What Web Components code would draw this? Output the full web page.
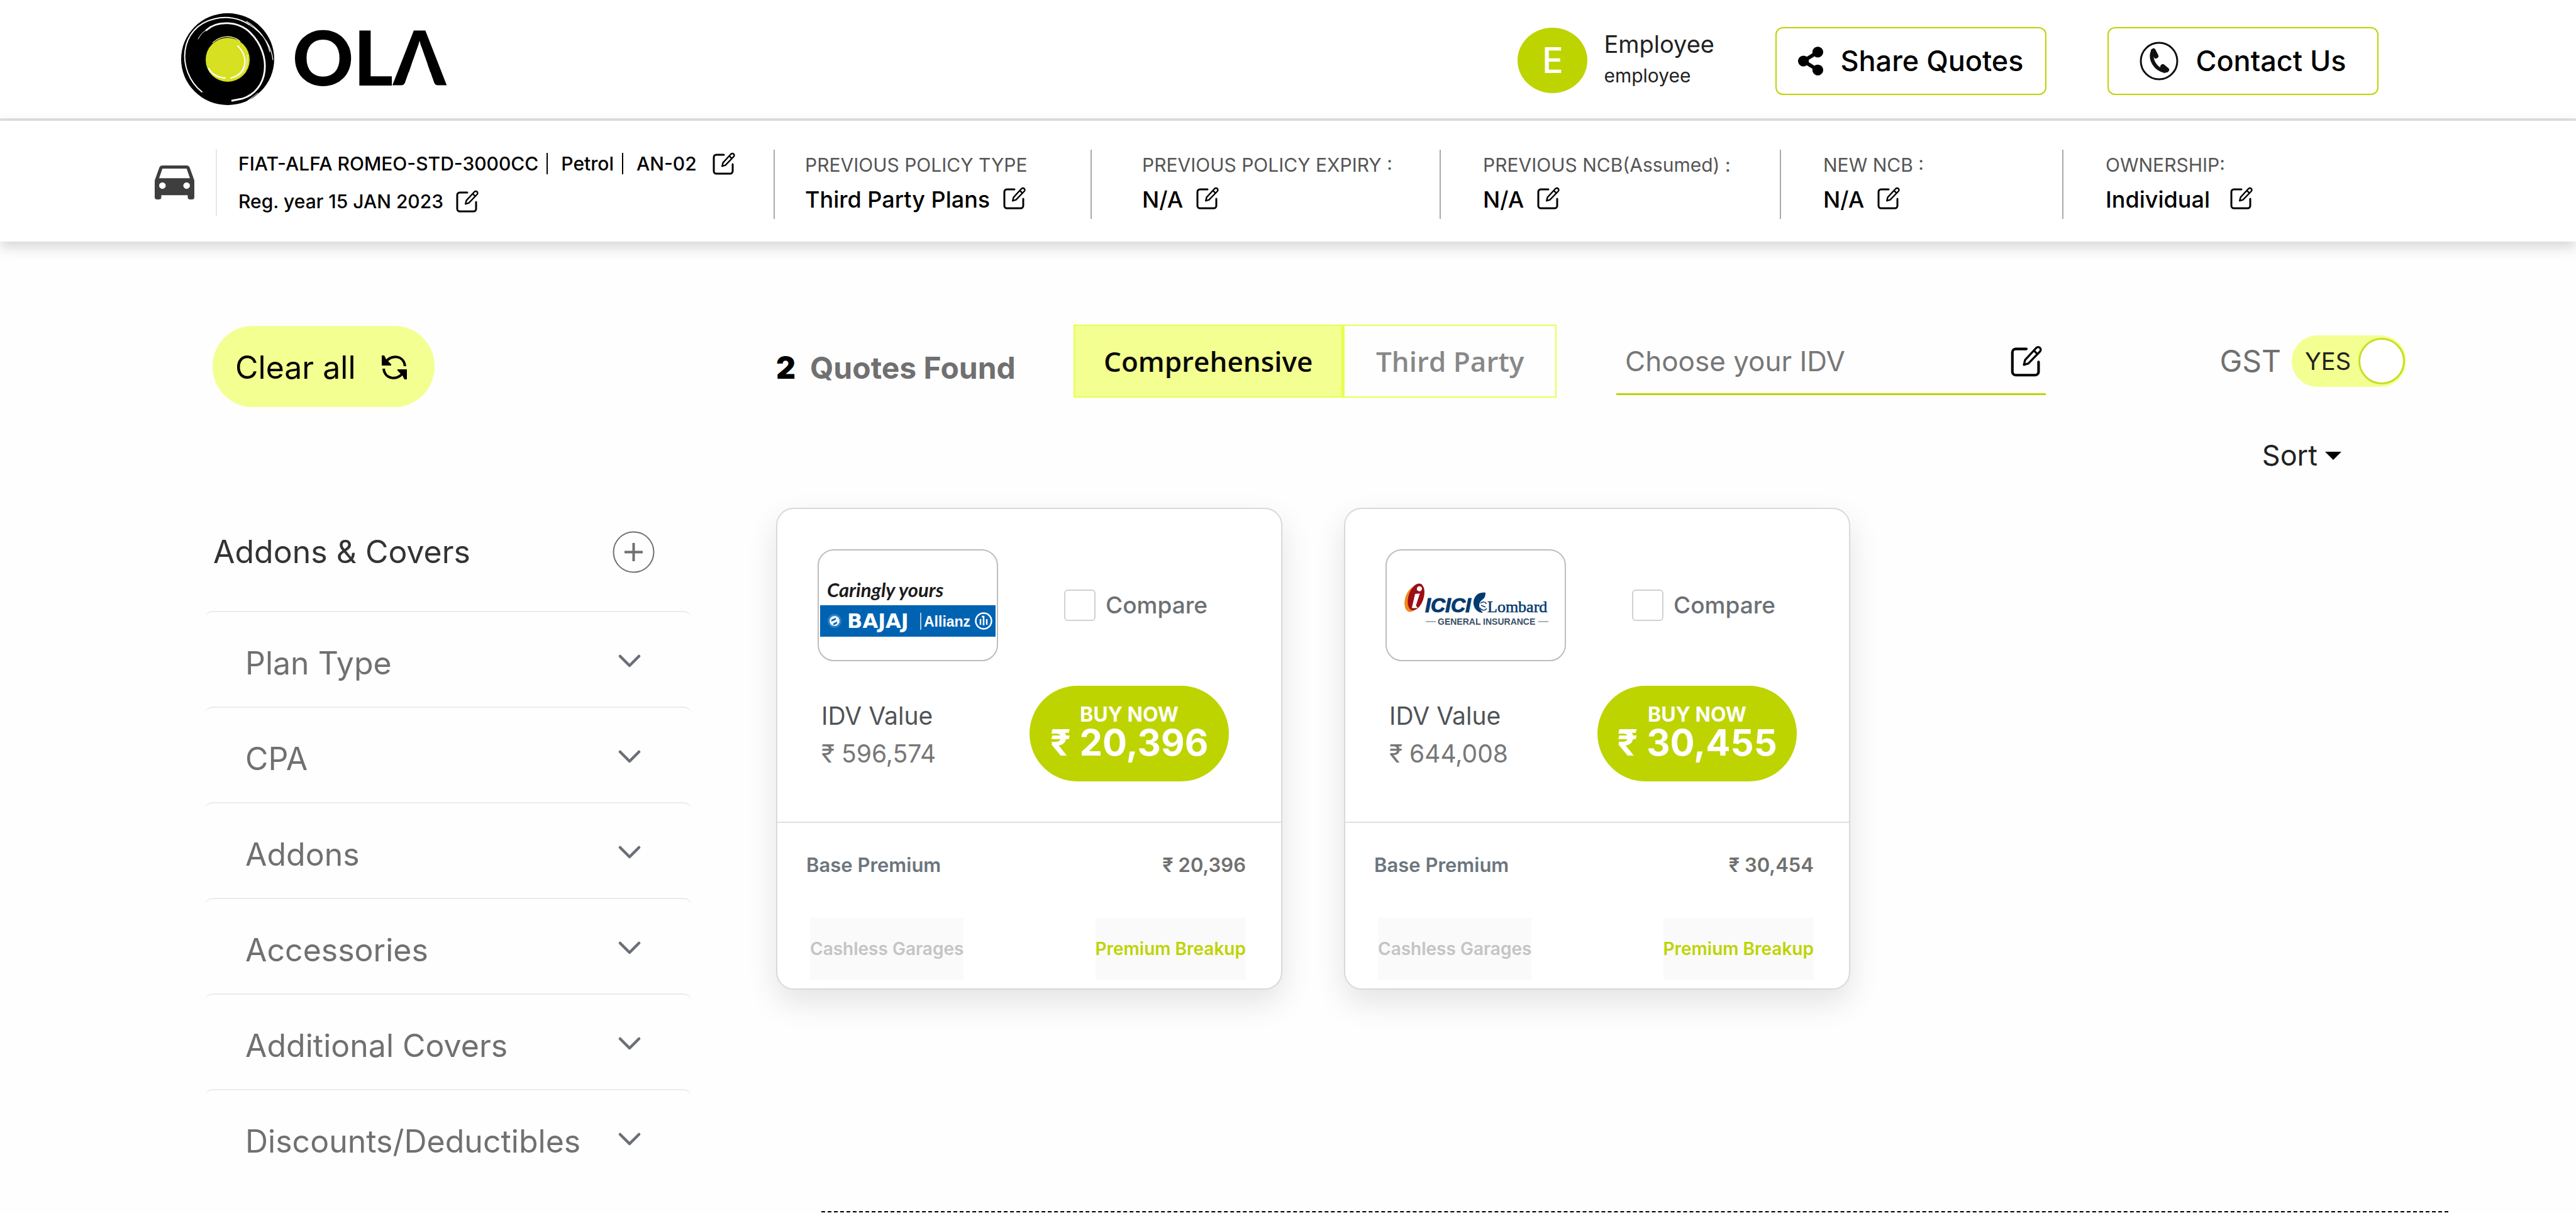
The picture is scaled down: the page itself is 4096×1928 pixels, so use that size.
<!DOCTYPE html>
<html lang="en">
<head>
<meta charset="utf-8">
<title>Ola Insurance Quotes</title>
<style>
  html, body { margin: 0; }
  body {
    font-family: Inter, "Noto Sans", sans-serif;
    color: #000;
    background: #fefefe;
    --lime: #bdd400;
    --lime-soft: #f3ff90;
    --lime-line: #e7ff4d;
    --grey: #707070;
  }
</style>
</head>
<body>
<quote-page></quote-page>
<script>
const BASE = `
  *, *::before, *::after { box-sizing: border-box; }
  button, input, select { font: inherit; color: inherit; background: none; border: 0; padding: 0; margin: 0; outline: 0; }
  button, a, label, select { cursor: pointer; }
  a { text-decoration: none; color: inherit; }
  svg { display: block; flex: none; }
  h2, h3, p { margin: 0; font: inherit; }
`;
function define(name, css, markup) {
  const template = document.createElement('template');
  customElements.define(name, class extends HTMLElement {
    constructor() {
      super();
      template.innerHTML = '<style>' + BASE + css + '</style>' + (typeof markup === 'function' ? markup(this) : markup);
      this.attachShadow({ mode: 'open' }).append(template.content.cloneNode(true));
    }
  });
}

/* Square with a pencil; --size sets its box */
define('edit-button', `
  :host { display: inline-flex; flex: none; }
  button { display: flex; }
  svg { width: var(--size, 36px); height: var(--size, 36px); }
`, `
  <button type="button" aria-label="Edit">
    <svg viewBox="0 0 36 36" fill="none" stroke="#000" stroke-width="3" stroke-linecap="round" stroke-linejoin="round">
      <path d="M18 4H6a4 4 0 0 0-4 4v22a4 4 0 0 0 4 4h22a4 4 0 0 0 4-4V19"/>
      <path stroke-width="2.4" d="M29.4 2.8a2.9 2.9 0 0 1 4.2 4.2L20.4 20.6l-5.2 1.6 1.4-5.6zM26.6 5.8l4 4"/>
    </svg>
  </button>
`);

define('brand-logo', `
  :host { display: flex; align-items: center; }
  .mark { width: 148px; height: 146px; }
  .word { width: 260px; height: 120px; margin-left: 32px; overflow: visible; }
`, `
  <svg class="mark" viewBox="0 0 148 146" fill="none">
    <ellipse cx="74" cy="73" rx="74" ry="73" fill="#000"/>
    <g stroke="#fff" stroke-linecap="round">
      <path stroke-width="2" d="M33 125C-8 92-4 22 53 9c20-5 40-1 55 9"/>
      <path stroke-width="2.8" d="M40 27C57 11 91 12 110 31c36 36 29 92-13 105l-16 3"/>
      <path stroke-width="1.3" d="M108 18c26 16 36 38 38 56M104 13c18 11 32 27 37 48"/>
      <path stroke-width="1" d="M27 41c3-6 7-11 13-14M106 139l16-12M114 137l11-11"/>
    </g>
    <ellipse cx="74" cy="74" rx="35" ry="35" fill="#d7e021"/>
    <path stroke="#fff" stroke-width="2.2" stroke-linecap="round" d="M90 52c18 17 15 44-11 51M44 88c5 9 14 14 26 15"/>
    <path stroke="#eef29a" stroke-width="1.5" d="M50 47c13-12 31-13 44-2M105 66c2 18-5 30-20 36"/>
  </svg>
  <svg class="word" viewBox="0 0 260 120">
    <text x="-3" y="102" font-family="Lato, sans-serif" font-weight="900" font-size="120" fill="#000">OLA</text>
    <path d="M186.500 68h25.300l12.200 35h-49.500z" fill="#fff"/>
  </svg>
`);

define('outline-button', `
  :host { display: block; }
  button {
    display: flex; align-items: center; justify-content: center;
    height: 108px; min-width: 431px; padding: 0 30px; gap: 27px;
    border: 2px solid var(--lime); border-radius: 12px; background: #fff;
    font-size: 45px; line-height: 60px; font-weight: 500; white-space: nowrap;
  }
`, `<button type="button"><slot name="icon"></slot><slot></slot></button>`);

define('site-header', `
  :host {
    display: flex; align-items: center; height: 192px;
    padding: 0 314px 0 288px; border-bottom: 4px solid #dfe1e5; background: #fff;
  }
  .right { display: flex; align-items: center; gap: 97px; margin-left: auto; padding-top: 6px; }
  .user { display: flex; align-items: center; gap: 26px; padding-bottom: 2px; }
  .avatar {
    display: flex; align-items: center; justify-content: center;
    width: 111px; height: 104px; border-radius: 50%;
    background: var(--lime); color: #fff; font-size: 56px; line-height: 64px; font-weight: 500;
  }
  .name { font-size: 38px; line-height: 48px; color: #222; }
  .role { font-size: 30px; line-height: 52px; color: #222; }
`, `
  <brand-logo role="img" aria-label="Ola"></brand-logo>
  <div class="right">
    <div class="user">
      <div class="avatar">E</div>
      <div><div class="name">Employee</div><div class="role">employee</div></div>
    </div>
    <outline-button>
      <svg slot="icon" width="40" height="46" viewBox="0 0 448 512"><path d="M352 320c-22.608 0-43.387 7.819-59.79 20.895l-102.486-64.054a96.551 96.551 0 0 0 0-41.683l102.486-64.054C308.613 184.181 329.392 192 352 192c53.019 0 96-42.981 96-96S405.019 0 352 0s-96 42.981-96 96c0 7.158.79 14.13 2.276 20.841L155.79 180.895C139.387 167.819 118.608 160 96 160c-53.019 0-96 42.981-96 96s42.981 96 96 96c22.608 0 43.387-7.819 59.79-20.895l102.486 64.054A96.301 96.301 0 0 0 256 416c0 53.019 42.981 96 96 96s96-42.981 96-96-42.981-96-96-96z"/></svg>
      Share Quotes
    </outline-button>
    <outline-button>
      <svg slot="icon" width="62" height="62" viewBox="0 0 62 62" fill="none" stroke="#111" stroke-linecap="round">
        <circle cx="31" cy="31" r="29" stroke-width="3"/>
        <path stroke-width="6" d="M20 18c-3 11 5 26 20 29"/>
        <path stroke-width="8" d="M22 15l4 8M37 40l6 5"/>
      </svg>
      Contact Us
    </outline-button>
  </div>
`);

define('policy-fact', `
  :host { display: block; height: 110px; padding-left: var(--inset, 67px); border-left: 2px solid #a9a9a9; white-space: nowrap; }
  .label { font-size: 30px; line-height: 48px; color: #555; }
  .value { display: flex; align-items: center; gap: var(--gap, 21px); font-size: 36px; line-height: 62px; font-weight: 500; }
  edit-button { padding-bottom: 4px; }
`, el => `
  <div class="label">${el.getAttribute('label')}</div>
  <div class="value"><slot></slot><edit-button></edit-button></div>
`);

define('policy-bar', `
  :host {
    display: grid; grid-template-columns: 984fr 504fr 555fr 541fr 449fr 817fr; align-items: center;
    height: 192px; padding: 10px 0 0 246px; background: #fff; position: relative;
    box-shadow: 0 8px 20px rgba(0, 0, 0, .17);
  }
  .vehicle { display: flex; align-items: center; padding-bottom: 6px; white-space: nowrap; }
  .lines { margin-left: 34px; padding-left: 34px; border-left: 2px solid #e6e6e6; font-size: 30px; line-height: 60px; font-weight: 500; height: 106px; display: flex; flex-direction: column; justify-content: center; }
  .line { display: flex; align-items: center; }
  .bar { width: 2px; height: 34px; margin: 0 21px 0 13px; background: #000; }
  .line edit-button { margin-left: 20px; }
  .line.model edit-button { margin-left: 25px; }
`, `
  <div class="vehicle">
    <svg width="63" height="54" viewBox="3 5 18 16" preserveAspectRatio="none" fill="#3e3e3e"><path d="M18.92 6.01C18.72 5.42 18.16 5 17.5 5h-11c-.66 0-1.21.42-1.42 1.01L3 12v8c0 .55.45 1 1 1h1c.55 0 1-.45 1-1v-1h12v1c0 .55.45 1 1 1h1c.55 0 1-.45 1-1v-8l-2.08-5.99zM6.5 16c-.83 0-1.5-.67-1.5-1.5S5.67 13 6.5 13s1.5.67 1.5 1.5S7.33 16 6.5 16zm11 0c-.83 0-1.5-.67-1.5-1.5s.67-1.5 1.5-1.5 1.5.67 1.5 1.5-.67 1.5-1.5 1.5zM5 11l1.5-4.5h11L19 11H5z"/></svg>
    <div class="lines">
      <div class="line model"><span>FIAT-ALFA ROMEO-STD-3000CC</span><i class="bar"></i><span>Petrol</span><i class="bar"></i><span>AN-02</span><edit-button></edit-button></div>
      <div class="line"><span>Reg. year 15 JAN 2023</span><edit-button></edit-button></div>
    </div>
  </div>
  <policy-fact label="PREVIOUS POLICY TYPE" style="--inset:48px">Third Party Plans</policy-fact>
  <policy-fact label="PREVIOUS POLICY EXPIRY :" style="--inset:80px">N/A</policy-fact>
  <policy-fact label="PREVIOUS NCB(Assumed) :">N/A</policy-fact>
  <policy-fact label="NEW NCB :">N/A</policy-fact>
  <policy-fact label="OWNERSHIP:" style="--gap:32px">Individual</policy-fact>
`);

define('filter-item', `
  :host { display: block; }
  button {
    display: flex; align-items: center; justify-content: space-between; width: 100%; height: 152px;
    padding: 12px 80px 0 64px; border-top: 2px solid #ebebeb; border-radius: 12px;
    font-size: 50px; line-height: 60px; color: var(--grey); text-align: left; white-space: nowrap;
  }
  svg { margin-bottom: 6px; }
`, `
  <button type="button" aria-expanded="false"><span><slot></slot></span>
    <svg width="36" height="22" viewBox="0 0 36 22" fill="none" stroke="#6b6e78" stroke-width="4.5" stroke-linecap="round" stroke-linejoin="round"><path d="M3 3l15 15L33 3"/></svg>
  </button>
`);

define('filter-panel', `
  :host { display: block; }
  .clear {
    display: flex; align-items: center; justify-content: space-between;
    width: 353px; height: 129px; margin: 2px 0 0 12px; padding: 2px 44px 0 36px;
    border-radius: 64px; background: var(--lime-soft); font-size: 50px; line-height: 60px;
  }
  .head { display: flex; align-items: center; justify-content: space-between; height: 188px; margin-top: 136px; padding: 0 58px 0 13px; }
  h2 { font-size: 50px; line-height: 60px; color: #333; }
`, `
  <button class="clear" type="button">Clear all
    <svg width="40" height="40" viewBox="0 0 40 40" fill="none" stroke="#000" stroke-width="4">
      <path d="M6 12C14-1 35 0 37 18M34 28C26 41 5 40 3 22"/>
      <path fill="#000" stroke="none" d="M0 1h4l3 6 8 8v2H0zM40 39h-4l-3-6-8-8v-2h15z"/>
    </svg>
  </button>
  <div class="head">
    <h2>Addons &amp; Covers</h2>
    <button type="button" aria-label="Expand all">
      <svg width="67" height="67" viewBox="0 0 67 67" fill="none" stroke="#707070"><circle cx="33.500" cy="33.500" r="32" stroke-width="2"/><path stroke-width="4" d="M19 33.500h29M33.500 19v29"/></svg>
    </button>
  </div>
  <filter-item>Plan Type</filter-item>
  <filter-item>CPA</filter-item>
  <filter-item>Addons</filter-item>
  <filter-item>Accessories</filter-item>
  <filter-item>Additional Covers</filter-item>
  <filter-item>Discounts/Deductibles</filter-item>
`);

define('quote-toolbar', `
  :host { display: block; padding-right: 67px; }
  .row { display: flex; align-items: center; height: 116px; gap: 95px; white-space: nowrap; }
  .count { flex: none; width: 378px; padding-top: 22px; display: flex; gap: 23px; font-size: 48px; line-height: 60px; font-weight: 700; color: var(--grey); }
  .count b { color: #000; }
  .tabs { flex: none; display: flex; width: 768px; border: 2px solid var(--lime-line); height: 116px; font: 600 44px/60px "Open Sans", sans-serif; }
  .tabs button { flex: 1; color: #888; }
  .tabs .on { flex: none; padding: 0 46px; background: var(--lime-soft); color: #0a0a0a; border-right: 5px solid var(--lime-line); }
  .idv { flex: 0 1 683px; min-width: 0; display: flex; align-items: center; align-self: flex-start; height: 112px; padding: 6px 6px 0 14px; border-bottom: 3px solid var(--lime); --size: 50px; }
  .idv input { flex: 1; min-width: 0; font-size: 44px; line-height: 60px; }
  .idv input::placeholder { color: #777; opacity: 1; }
  .gst { display: flex; align-items: center; gap: 17px; margin-left: auto; font-size: 48px; line-height: 60px; color: var(--grey); }
  .gst input { position: absolute; opacity: 0; width: 1px; height: 1px; }
  .track { display: flex; align-items: center; justify-content: space-between; width: 182px; height: 82px; padding: 0 2px 0 21px; border-radius: 41px; background: var(--lime-soft); color: #222; font-size: 38px; }
  .knob { width: 74px; height: 74px; border: 3px solid #c8de22; border-radius: 50%; background: #fff; }
  .sort { display: flex; align-items: center; justify-content: flex-end; gap: 12px; margin-top: 68px; padding-right: 103px; font-size: 45px; line-height: 48px; color: #222; }
  select { appearance: none; field-sizing: content; height: 48px; }
`, `
  <div class="row">
    <div class="count"><b>2</b><span>Quotes Found</span></div>
    <div class="tabs"><button type="button" class="on">Comprehensive</button><button type="button">Third Party</button></div>
    <div class="idv"><input type="text" placeholder="Choose your IDV" aria-label="Choose your IDV"><edit-button></edit-button></div>
    <label class="gst">GST<input type="checkbox" checked><span class="track">YES<i class="knob"></i></span></label>
  </div>
  <div class="sort">
    <select aria-label="Sort"><option>Sort</option></select>
    <svg width="26" height="13" viewBox="0 0 26 13"><path d="M0 0h26L13 13z"/></svg>
  </div>
`);

define('bajaj-logo', `:host { display: block; } svg { width: 283px; height: 174px; }`, `
  <svg viewBox="0 0 283 174">
    <text x="13" y="74" font-family="Lato, cursive" font-style="italic" font-weight="700" font-size="31" fill="#1b1b1b">Caringly yours</text>
    <rect x="2" y="87" width="279" height="50" fill="#0063b2"/>
    <circle cx="25" cy="112" r="11" fill="#2f7fc4"/><circle cx="25" cy="112" r="8" fill="#eef4fb"/>
    <path d="M20 110l7-3v3l-7 3zm3 6l6-3v3l-6 3z" fill="#0063b2"/>
    <g fill="#fff" font-weight="700">
      <text x="45" y="123" font-family="DejaVu Sans, sans-serif" font-size="32">BAJAJ</text>
      <text x="167" y="121" font-family="Liberation Sans, sans-serif" font-size="23">Allianz</text>
    </g>
    <path d="M162 99v27" stroke="#a9cbe8" stroke-width="2"/>
    <g fill="none" stroke="#fff" stroke-width="2.500"><circle cx="262" cy="112" r="12.500"/><path d="M257 118v-9M262 119v-14h-3M267 118v-9"/></g>
  </svg>
`);

define('icici-logo', `:host { display: block; } svg { width: 283px; height: 174px; }`, `
  <svg viewBox="0 0 283 174">
    <g transform="rotate(18 47 76)">
      <ellipse cx="42" cy="79" rx="12" ry="21" fill="#f08a1d"/>
      <ellipse cx="46" cy="74" rx="12" ry="22" fill="#9c0d16"/>
      <path d="M43 70l7-3v20l4 3-9 3z" fill="#fff"/><circle cx="47" cy="60" r="4" fill="#fff"/>
    </g>
    <text x="61" y="98" font-family="Liberation Sans, sans-serif" font-style="italic" font-weight="700" font-size="32" fill="#053a70" stroke="#053a70">ICICI</text>
    <path d="M157 67c-13-2-20 8-19 18 1 8 7 14 15 14-7-7-8-15-2-20 5-3 6-7 6-12z" fill="#053a70"/>
    <path d="M149 84c4-4 9-2 9 1M148 91c3 5 9 5 11 1M150 87l7 3" fill="none" stroke="#053a70" stroke-width="1.500"/>
    <text x="160" y="98" font-family="Liberation Serif, serif" font-size="26" fill="#053a70" stroke="#053a70" stroke-width=".6">Lombard</text>
    <text x="81" y="118" font-family="Liberation Sans, sans-serif" font-weight="700" font-size="14" fill="#3b4f68">GENERAL INSURANCE</text>
    <path d="M62 113h16M241 113h16" stroke="#8b98a8" stroke-width="1.500"/>
  </svg>
`);

define('quote-card', `
  :host {
    display: block; border: 2px solid #d9d9d9; border-radius: 28px; background: #fff; white-space: nowrap;
    box-shadow: 0 20px 50px rgba(0, 0, 0, .11);
  }
  .top { padding: 64px 83px 64px 64px; border-bottom: 2px solid #e0e0e0; display: grid; gap: 39px; }
  .row { display: flex; align-items: center; justify-content: space-between; }
  .logo { width: 287px; height: 178px; border: 2px solid #bdbdbd; border-radius: 26px; overflow: hidden; }
  .compare { display: flex; align-items: center; gap: 16px; padding-right: 34px; font-size: 37px; line-height: 48px; font-weight: 500; color: #6c7074; }
  .compare input { appearance: none; width: 50px; height: 50px; border: 2px solid #d0d1d5; border-radius: 6px; background: #fff; }
  .idv { padding: 4px 0 0 6px; font-size: 39px; line-height: 60px; color: #777; }
  .idv h3 { color: #4f5357; }
  .buy {
    display: flex; flex-direction: column; align-items: center; justify-content: center;
    width: 317px; height: 152px; padding-bottom: 12px; border-radius: 76px; background: var(--lime); color: #fff;
    font-weight: 700; font-size: 32px; line-height: 40px;
  }
  .buy span { font-size: 58px; line-height: 48px; }
  .bottom { padding: 43px 56px 14px 46px; }
  .premium { font-size: 31px; line-height: 48px; font-weight: 600; color: #6c757d; }
  .premium span + span { color: var(--grey); }
  .links { margin-top: 60px; padding-left: 6px; font-size: 28px; line-height: 98px; font-weight: 600; }
  .links button { background: #fafafa; }
  .links .off { color: #c4c4c4; }
  .links .on { color: var(--lime); }
`, el => `
  <div class="top">
    <div class="row">
      <div class="logo"><slot></slot></div>
      <label class="compare"><input type="checkbox">Compare</label>
    </div>
    <div class="row">
      <div class="idv"><h3>IDV Value</h3><p>₹ ${el.getAttribute('idv')}</p></div>
      <button class="buy" type="button">BUY NOW<span>₹ ${el.getAttribute('price')}</span></button>
    </div>
  </div>
  <div class="bottom">
    <div class="row premium"><span>Base Premium</span><span>₹ ${el.getAttribute('base')}</span></div>
    <div class="row links"><button type="button" class="off">Cashless Garages</button><button type="button" class="on">Premium Breakup</button></div>
  </div>
`);

define('quote-page', `
  :host { display: block; }
  main { display: grid; grid-template-columns: 773px 1fr; column-gap: 135px; padding: 132px 203px 0 326px; }
  .cards { display: grid; grid-template-columns: repeat(auto-fill, 805px); gap: 98px; margin-top: 59px; }
  hr { margin: 352px 0 0 72px; border: 0; border-top: 2px dashed #000; }
`, `
  <site-header></site-header>
  <policy-bar></policy-bar>
  <main>
    <filter-panel></filter-panel>
    <section>
      <quote-toolbar></quote-toolbar>
      <div class="cards">
        <quote-card idv="596,574" price="20,396" base="20,396"><bajaj-logo></bajaj-logo></quote-card>
        <quote-card idv="644,008" price="30,455" base="30,454"><icici-logo></icici-logo></quote-card>
      </div>
      <hr>
    </section>
  </main>
`);
</script>
</body>
</html>
